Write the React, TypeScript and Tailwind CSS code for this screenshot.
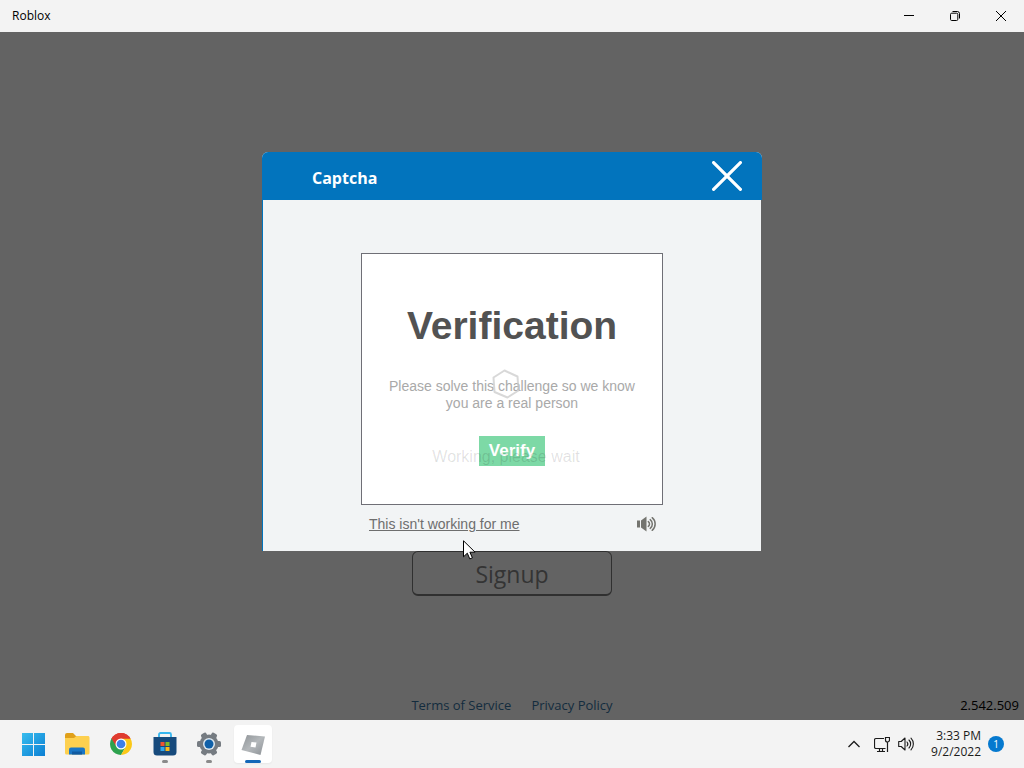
import type { ReactNode } from 'react'

function TitleBar() {
  return (
    <header className="flex h-8 shrink-0 items-center justify-between bg-[#f3f3f3] pl-3 text-black">
      <h1 className="text-[12px]">Roblox</h1>
      <div className="flex h-full">
        <button type="button" aria-label="Minimize" className="flex w-[46px] items-center justify-center">
          <svg width="10" height="10" viewBox="0 0 10 10" stroke="currentColor"><path d="M0 4.5h10" /></svg>
        </button>
        <button type="button" aria-label="Restore" className="flex w-[46px] items-center justify-center">
          <svg width="10" height="10" viewBox="0 0 10 10" fill="none" stroke="currentColor">
            <rect x="0.5" y="2.2" width="7.300" height="7.300" rx="1.2" />
            <path d="M2.5 0.5h4.8a2.200 2.200 0 0 1 2.200 2.200v4.8" />
          </svg>
        </button>
        <button type="button" aria-label="Close" className="flex w-[46px] items-center justify-center">
          <svg width="10" height="10" viewBox="0 0 10 10" stroke="currentColor"><path d="M0 0l10 10M10 0L0 10" /></svg>
        </button>
      </div>
    </header>
  )
}

function SpeakerIcon() {
  return (
    <svg width="20" height="16" viewBox="0 0 20 16" fill="#74746f">
      <path d="M0 4.5h3v7H0zM4 4.5L9.5 0.5v15L4 11.5z" />
      <g fill="none" stroke="#74746f" strokeWidth="1.5" strokeLinecap="round">
        <path d="M11.3 5.6a3 3 0 0 1 0 4.8" />
        <path d="M13.2 3.6a5.6 5.6 0 0 1 0 8.8" />
        <path d="M15.2 1.7a8.2 8.2 0 0 1 0 12.6" />
      </g>
    </svg>
  )
}

function Challenge() {
  return (
    <div className="w-[302px] font-['Liberation_Sans',Arial,sans-serif]">
      <div className="relative flex h-[252px] flex-col items-center border border-[#6f6f76] bg-white pt-12 text-center">
        <h3 className="text-[39px] leading-12 font-bold text-[#525252]">Verification</h3>
        <p className="mt-7 px-4 text-[14px] leading-[17px] text-[#a9a9a9]">
          Please solve this challenge so we know you are a real person
        </p>
        <button type="button" className="mt-6 h-[30px] bg-[#7dd9a6] px-[10px] text-[17px] leading-[30px] font-bold text-white">Verify</button>
        {/* loading state fading out over the challenge */}
        <div className="pointer-events-none absolute inset-x-0 top-[115px] flex flex-col items-center gap-[48px] pr-3">
          <svg width="30" height="30" viewBox="0 0 30 30" fill="none" stroke="#c8c8c8" strokeOpacity="0.7" strokeWidth="2">
            <path d="M13.5 1.5L26.5 7.5L27.5 21.5L16.5 28.5L3.5 23L2.5 8.5Z" strokeLinejoin="round" />
          </svg>
          <p className="text-[16px] leading-5 text-black/12">Working, please wait</p>
        </div>
      </div>
      <div className="flex h-[38px] items-center justify-between pr-[6px] pl-2">
        <a href="#help" className="text-[14px] text-[#6e6e6e] underline">This isn't working for me</a>
        <button type="button" aria-label="Audio challenge"><SpeakerIcon /></button>
      </div>
    </div>
  )
}

function CaptchaDialog() {
  return (
    <section role="dialog" aria-labelledby="captcha-title" className="w-full max-w-[500px] overflow-hidden rounded-t-md bg-[#f2f4f5]">
      <div className="flex h-12 items-center justify-between bg-[#0274bd] pr-5 pl-[50px]">
        <h2 id="captcha-title" className="pt-1 text-[16px] font-bold text-white">Captcha</h2>
        <button type="button" aria-label="Close captcha">
          <svg width="30" height="30" viewBox="0 0 30 30" stroke="white" strokeWidth="3.2" strokeLinecap="round">
            <path d="M1.6 1.6l26.800 26.800M28.400 1.600l-26.800 26.800" />
          </svg>
        </button>
      </div>
      <div className="flex justify-center border-x border-r-[#636363] border-l-[#0274bd] pt-[53px] pb-2">
        <Challenge />
      </div>
    </section>
  )
}

function Pointer() {
  return (
    <svg className="pointer-events-none absolute top-[540px] left-[463px]" width="13" height="20" viewBox="0 0 13 20">
      <path d="M0.5 0.8v16l3.8-3.6 2.5 5.7 2.6-1.1-2.5-5.6h5.2z" fill="white" stroke="black" />
    </svg>
  )
}

function WindowsIcon() {
  return (
    <svg width="24" height="24" viewBox="0 0 24 24">
      <defs>
        <linearGradient id="win" x1="0" y1="0" x2="1" y2="1">
          <stop offset="0" stopColor="#38bdee" />
          <stop offset="1" stopColor="#0b7fd3" />
        </linearGradient>
      </defs>
      <path fill="url(#win)" d="M1 1h11v11H1zM13 1H24v11H13zM1 13h11v11H1zM13 13H24V24H13z" />
    </svg>
  )
}

function FolderIcon() {
  return (
    <svg width="26" height="24" viewBox="0 0 26 24">
      <path d="M1 3a2 2 0 0 1 2-2h6l3 3h11a2 2 0 0 1 2 2v6H1z" fill="#e0a01a" />
      <path d="M1 6h9l2.500-2H24a1.500 1.500 0 0 1 1.500 1.500V21a1.500 1.500 0 0 1-1.500 1.500H2.500A1.500 1.500 0 0 1 1 21z" fill="#fdd04f" />
      <path d="M5 22.500v-5a2 2 0 0 1 2-2h12a2 2 0 0 1 2 2v5z" fill="#1976c5" />
      <path d="M8 19.500h10v3H8z" fill="#105aa0" />
    </svg>
  )
}

function ChromeIcon() {
  return (
    <svg width="24" height="24" viewBox="0 0 48 48">
      <path d="M24 24L4.950 13A22 22 0 0 1 43.050 13z" fill="#df3b2f" />
      <path d="M4.950 13A22 22 0 0 0 24 46L33.500 29.500L24 24z" fill="#2da24e" />
      <path d="M43.050 13A22 22 0 0 1 24 46L33.500 29.500L24 13z" fill="#fbc817" />
      <path d="M4.950 13L14.500 29.500L24 24V13z" fill="#2da24e" />
      <path d="M4.950 13L14 28L24 13h19.050A22 22 0 0 0 4.950 13z" fill="#df3b2f" />
      <circle cx="24" cy="24" r="11" fill="white" />
      <circle cx="24" cy="24" r="8.700" fill="#3c7fe8" />
    </svg>
  )
}

function StoreIcon() {
  return (
    <svg width="24" height="24" viewBox="0 0 24 24">
      <path d="M6 6V2.500A1.500 1.500 0 0 1 7.500 1h9A1.500 1.500 0 0 1 18 2.500V6" fill="none" stroke="#35b6ef" strokeWidth="1.800" />
      <path d="M0.500 5h23v15a3.500 3.500 0 0 1-3.500 3.500H4A3.500 3.500 0 0 1 0.500 20z" fill="#164a7c" />
      <path d="M7.500 10h4v4h-4z" fill="#ef5430" />
      <path d="M12.500 10h4v4h-4z" fill="#7dba2c" />
      <path d="M7.500 15h4v4h-4z" fill="#2ea7ec" />
      <path d="M12.500 15h4v4h-4z" fill="#fdba18" />
    </svg>
  )
}

function SettingsIcon() {
  return (
    <svg width="24" height="24" viewBox="0 0 24 24">
      <g fill="#757b81">
        <circle cx="12" cy="12" r="9.500" />
        <rect x="9" y="0" width="6" height="24" rx="1.500" transform="rotate(30 12 12)" />
        <rect x="9" y="0" width="6" height="24" rx="1.500" transform="rotate(90 12 12)" />
        <rect x="9" y="0" width="6" height="24" rx="1.500" transform="rotate(150 12 12)" />
      </g>
      <circle cx="12" cy="12" r="6" fill="#dfe8ef" />
      <circle cx="12" cy="12" r="4.500" fill="#1060a8" />
    </svg>
  )
}

function RobloxIcon() {
  return (
    <svg width="24" height="24" viewBox="0 0 24 24">
      <defs>
        <linearGradient id="rbx" x1="0" y1="0" x2="1" y2="1">
          <stop offset="0" stopColor="#8d9296" />
          <stop offset="0.500" stopColor="#b4b8bb" />
          <stop offset="1" stopColor="#8b9095" />
        </linearGradient>
      </defs>
      <path d="M6 3L24 4.500L19.500 23L0.500 18z" fill="url(#rbx)" />
      <path d="M10.500 10l5 0.500-1 5-5-0.800z" fill="white" />
    </svg>
  )
}

const APPS: { name: string; icon: ReactNode; state: 'idle' | 'running' | 'active' }[] = [
  { name: 'Start', icon: <WindowsIcon />, state: 'idle' },
  { name: 'File Explorer', icon: <FolderIcon />, state: 'idle' },
  { name: 'Google Chrome', icon: <ChromeIcon />, state: 'idle' },
  { name: 'Microsoft Store', icon: <StoreIcon />, state: 'running' },
  { name: 'Settings', icon: <SettingsIcon />, state: 'running' },
  { name: 'Roblox', icon: <RobloxIcon />, state: 'active' },
]

function Taskbar() {
  return (
    <footer className="flex h-12 shrink-0 items-center justify-between bg-[#f3f3f3] pr-5 pl-[14px] text-[#1b1b1b]">
      <nav className="flex gap-[6px]">
        {APPS.map(app => (
          <button key={app.name} type="button" aria-label={app.name}
            className={`relative flex size-[38px] items-center justify-center rounded ${app.state === 'active' ? 'bg-white shadow-xs' : ''}`}>
            {app.icon}
            {app.state === 'running' && <span className="absolute bottom-0 h-[3px] w-[6px] rounded-full bg-[#8a8a8a]" />}
            {app.state === 'active' && <span className="absolute bottom-0 h-[3px] w-4 rounded-full bg-[#1267b8]" />}
          </button>
        ))}
      </nav>
      <div className="flex items-center">
        <button type="button" aria-label="Show hidden icons" className="mr-[14px]">
          <svg width="12" height="8" viewBox="0 0 12 8" fill="none" stroke="currentColor" strokeWidth="1.300"><path d="M0.500 7L6 1.500L11.500 7" /></svg>
        </button>
        <button type="button" aria-label="Network" className="mr-2">
          <svg width="16" height="17" viewBox="0 0 16 17" fill="none" stroke="currentColor" strokeWidth="1.200">
            <path d="M10 2.500H2a1.500 1.500 0 0 0-1.500 1.500v7A1.500 1.500 0 0 0 2 12.500h9.500M5.500 12.500v3M8.500 12.500v3M3 15.500h8" />
            <path d="M11.500 1.500h4v2.500a2 2 0 0 1-4 0zM13.500 6v10" />
          </svg>
        </button>
        <button type="button" aria-label="Volume">
          <svg width="17" height="16" viewBox="0 0 17 16" fill="none" stroke="currentColor" strokeWidth="1.100" strokeLinejoin="round" strokeLinecap="round">
            <path d="M0.700 5.500h2.500L7 2v12l-3.800-3.500H0.700z" />
            <path d="M9 6a3 3 0 0 1 0 4M11 4a5.700 5.700 0 0 1 0 8M13 2.200a8.300 8.300 0 0 1 0 11.600" />
          </svg>
        </button>
        <button type="button" className="ml-4 text-right text-[12px] leading-4">
          <time className="block">3:33 PM</time>
          <time className="block">9/2/2022</time>
        </button>
        <span className="ml-[7px] flex size-4 items-center justify-center rounded-full bg-[#0579cf] text-[10px] text-white">1</span>
      </div>
    </footer>
  )
}

export default function App() {
  return (
    <div className="relative flex min-h-screen flex-col bg-[#636363] font-['Open_Sans','Noto_Sans',sans-serif]">
      <TitleBar />
      <main className="flex flex-1 flex-col items-center pt-[120px]">
        <CaptchaDialog />
        <button type="button" className="h-[45px] w-[200px] rounded-md border border-b-2 border-[#303030] pt-[2px] text-[23px] text-[#343434]">Signup</button>
        <div className="mt-auto grid w-full grid-cols-[1fr_auto_1fr] items-center px-[5px] pb-[5px]">
          <nav className="col-start-2 flex gap-5 text-[13px] text-[#132c3e]">
            <a href="#terms">Terms of Service</a>
            <a href="#privacy">Privacy Policy</a>
          </nav>
          <span className="justify-self-end text-[13px] text-black">2.542.509</span>
        </div>
      </main>
      <Taskbar />
      <Pointer />
    </div>
  )
}
